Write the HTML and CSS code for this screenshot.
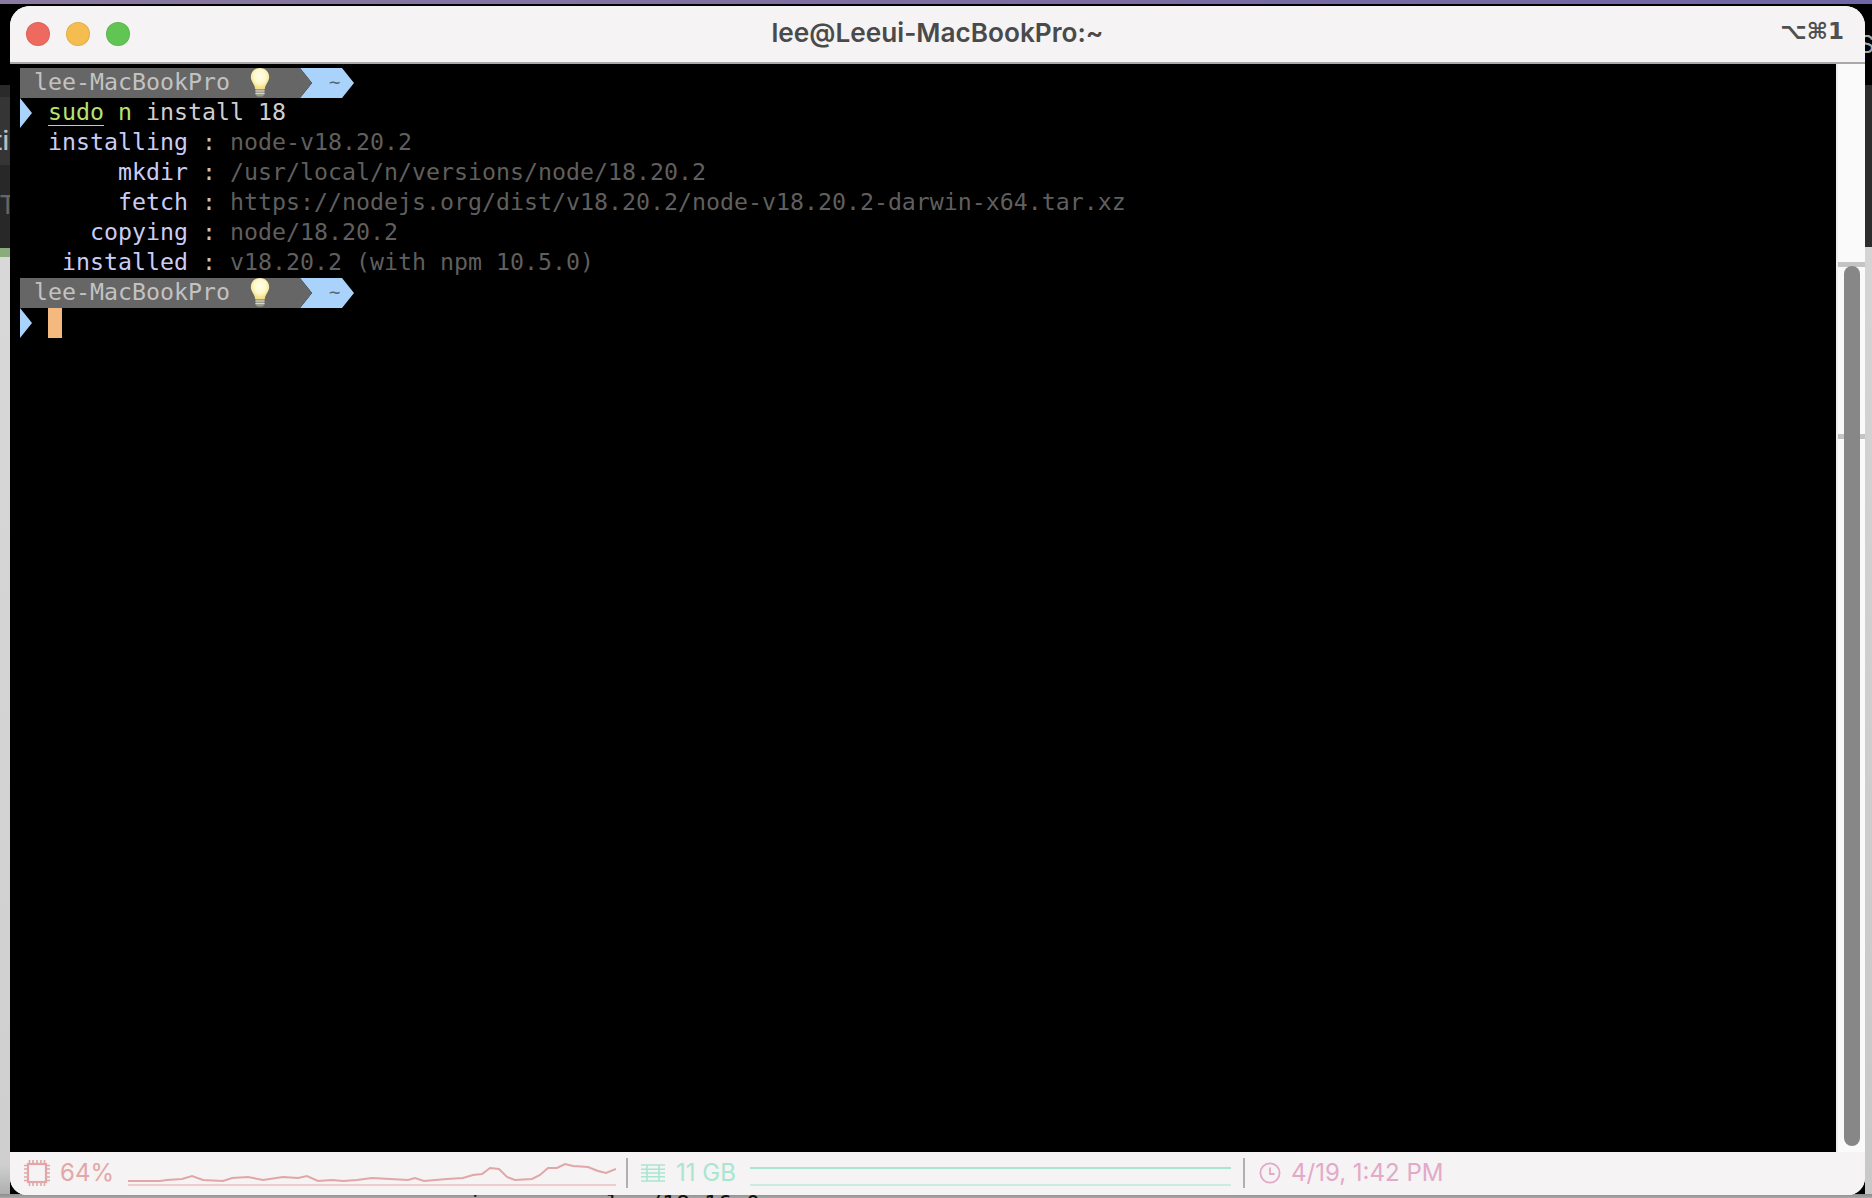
FILE: index.html
```html
<!DOCTYPE html>
<html lang="en">
<head>
<meta charset="utf-8">
<title>lee@Leeui-MacBookPro:~</title>
<link rel="stylesheet" href="styles.css">
</head>
<body>
<div class="desktop">
  <div class="bg-top"></div>
  <div class="bg-left"><span class="frag-ti">ti</span><span class="frag-t">T</span></div>
  <div class="bg-right"><span class="frag-s">S</span></div>
  <div class="bg-bottom"><span class="frag-i">i</span><span class="frag-path">l  /18.16.0</span></div>

  <main class="window">
    <header class="titlebar">
      <div class="lights">
        <span class="light red"></span>
        <span class="light yellow"></span>
        <span class="light green"></span>
      </div>
      <div class="title">lee@Leeui-MacBookPro:~</div>
      <div class="hotkey">⌥⌘1</div>
    </header>

    <div class="body">
      <div class="terminal">
        <div class="row prompt">
          <div class="seg-host">lee-MacBookPro
            <svg class="bulb" viewBox="0 0 20 30"><defs><radialGradient id="g1" cx="50%" cy="40%" r="55%"><stop offset="0" stop-color="#fffef0"/><stop offset="0.6" stop-color="#fff9c8"/><stop offset="1" stop-color="#f5dd86"/></radialGradient></defs><path d="M10 1C4.500 1 .8 5 .8 10c0 4.600 3.600 6.500 4.400 12h9.600c.8-5.500 4.400-7.400 4.400-12C19.200 5 15.500 1 10 1z" fill="url(#g1)"/><path d="M5.500 22h9v5.500l-2 2h-5l-2-2z" fill="#9c9c8c"/><path d="M5.500 24h9M5.500 26.500h9" stroke="#d8d8c8" stroke-width="1"/></svg>
          </div>
          <div class="seg-home">~</div>
        </div>
        <div class="row"><span class="arrow"></span><span class="cmd">sudo</span><span class="cmd-n"> n</span><span class="plain"> install 18</span></div>
        <div class="row"><span class="label">  installing</span><span class="colon"> : </span><span class="dim">node-v18.20.2</span></div>
        <div class="row"><span class="label">       mkdir</span><span class="colon"> : </span><span class="dim">/usr/local/n/versions/node/18.20.2</span></div>
        <div class="row"><span class="label">       fetch</span><span class="colon"> : </span><span class="dim">https://nodejs.org/dist/v18.20.2/node-v18.20.2-darwin-x64.tar.xz</span></div>
        <div class="row"><span class="label">     copying</span><span class="colon"> : </span><span class="dim">node/18.20.2</span></div>
        <div class="row"><span class="label">   installed</span><span class="colon"> : </span><span class="dim">v18.20.2 (with npm 10.5.0)</span></div>
        <div class="row prompt">
          <div class="seg-host">lee-MacBookPro
            <svg class="bulb" viewBox="0 0 20 30"><path d="M10 1C4.500 1 .8 5 .8 10c0 4.600 3.600 6.500 4.400 12h9.600c.8-5.500 4.400-7.400 4.400-12C19.200 5 15.500 1 10 1z" fill="url(#g1)"/><path d="M5.500 22h9v5.500l-2 2h-5l-2-2z" fill="#9c9c8c"/><path d="M5.500 24h9M5.500 26.500h9" stroke="#d8d8c8" stroke-width="1"/></svg>
          </div>
          <div class="seg-home">~</div>
        </div>
        <div class="row"><span class="arrow"></span><span class="cursor"></span></div>
      </div>
      <div class="scrollbar">
        <div class="scroll-band band-a"></div>
        <div class="scroll-band band-b"></div>
        <div class="thumb"></div>
      </div>
    </div>

    <footer class="status">
      <div class="stat cpu">
        <svg class="icon-cpu" viewBox="0 0 26 26" fill="none" stroke="currentColor"><rect x="4" y="4" width="18" height="18" stroke-width="2.200"/><path stroke-width="1.600" d="M5.500 0v3M9 0v3M13 0v3M17 0v3M20.500 0v3M5.500 23v3M9 23v3M13 23v3M17 23v3M20.500 23v3M0 5.500h3M0 9h3M0 13h3M0 17h3M0 20.500h3M23 5.500h3M23 9h3M23 13h3M23 17h3M23 20.500h3"/></svg>
        <span class="stat-text">64%</span>
        <svg class="spark spark-cpu" viewBox="0 0 488 28" fill="none" preserveAspectRatio="none">
          <path class="base" d="M0 25h488"/>
          <polyline class="curve" points="0,21 32,21 39,20 54,19 64,16 75,20 95,21 104,18 120,17 135,20 155,17 170,18 179,16 190,21 204,20 215,21 229,20 244,18 262,19 280,20 287,18 296,21 319,19 335,18 345,15 354,14 362,8 371,9 379,17 387,20 404,19 412,15 420,8 429,8 437,4 445,6 460,7 470,11 478,13 488,9"/>
        </svg>
      </div>
      <span class="divider"></span>
      <div class="stat mem">
        <svg class="icon-mem" viewBox="0 0 24 18" fill="none" stroke="currentColor" stroke-width="1.600"><path d="M0 1h24M0 5.250h24M0 9h24M0 12.750h24M0 17h24M6 1v16M18 1v16"/></svg>
        <span class="stat-text">11 GB</span>
        <svg class="spark spark-mem" viewBox="0 0 481 28" fill="none" preserveAspectRatio="none">
          <path class="base" d="M0 25h481"/>
          <path class="curve" d="M0 8h481"/>
        </svg>
      </div>
      <span class="divider"></span>
      <div class="stat clock">
        <svg class="icon-clock" viewBox="0 0 22 22" fill="none" stroke="currentColor" stroke-width="1.800"><circle cx="11" cy="11" r="9.600"/><path d="M11 5.500V12h4.500"/></svg>
        <span class="stat-text">4/19, 1:42 PM</span>
      </div>
    </footer>
  </main>
</div>
</body>
</html>
```

FILE: styles.css
```css
* { box-sizing: border-box; }
html, body { margin: 0; padding: 0; background: #000; }
.desktop { position: relative; width: 1872px; height: 1198px; overflow: hidden; background: #000; font-family: Inter, "Liberation Sans", sans-serif; }

.bg-top { position: absolute; left: 0; top: 0; width: 1872px; height: 4px; background: linear-gradient(90deg, #8a7aa0, #7d6ea3 50%, #6f66a6); }
.bg-left { position: absolute; left: 0; top: 85px; width: 10px; height: 1113px; overflow: hidden; background: linear-gradient(180deg, #2a2a2a 0, #2a2a2a 12px, #353535 12px, #353535 80px, #282828 80px, #282828 163px, #8aab7c 163px, #8aab7c 172px, #d8d8d8 172px, #cfcfcf 1080px, #aaa 100%); color: #bcbcbc; font-size: 26px; line-height: 30px; }
.frag-ti { position: absolute; right: 1px; top: 41px; font-weight: 500; }
.frag-t { position: absolute; right: -6px; top: 105px; color: #666; }
.bg-right { position: absolute; right: 0; top: 6px; width: 7px; height: 1192px; overflow: hidden; background: linear-gradient(180deg, #000 0, #000 79px, #2c2c2c 79px, #2c2c2c 241px, #d4d4d4 241px, #c8c8c8 100%); color: #aaa; font-size: 24px; }
.frag-s { position: absolute; left: -6px; top: 24px; }
.bg-bottom { position: absolute; left: 0; top: 1194px; width: 1872px; height: 4px; overflow: hidden; background: linear-gradient(180deg, #8c8c8c, #a8a8a8); color: #111; font-size: 23.25px; line-height: 30px; font-family: "DejaVu Sans Mono", monospace; }
.frag-i { position: absolute; left: 468px; top: -5px; }
.frag-path { position: absolute; left: 606px; top: -5px; white-space: pre; }

.window { position: absolute; left: 10px; top: 6px; width: 1855px; height: 1189px; display: flex; flex-direction: column; overflow: hidden; border-radius: 20px 20px 17px 17px; background: #f5f3f4; }

.titlebar { position: relative; flex: 0 0 58px; display: flex; align-items: center; justify-content: center; background: #f5f3f4; border-bottom: 2px solid #a9a9a9; }
.lights { position: absolute; left: 16px; top: 16px; display: flex; gap: 16px; }
.light { width: 24px; height: 24px; border-radius: 50%; border: 1px solid rgba(0, 0, 0, 0.08); }
.red { background: #ee6a5f; }
.yellow { background: #f5bd4f; }
.green { background: #61c554; }
.title { font-size: 26.2px; font-weight: 600; color: #4a4a4a; letter-spacing: 0; margin-top: -3px; }
.hotkey { position: absolute; right: 21px; top: 9px; font-family: "DejaVu Sans", sans-serif; font-size: 23px; font-weight: 700; color: #505050; line-height: 32px; }

.body { flex: 1 1 auto; display: flex; min-height: 0; }
.terminal { flex: 1 1 auto; background: #000; padding: 4px 0 0 10px; font-family: "DejaVu Sans Mono", "Liberation Mono", monospace; font-size: 23.25px; overflow: hidden; }
.row { position: relative; height: 30px; line-height: 28px; white-space: pre; padding-left: 28px; display: block; }
.row .label { color: #c9cdf6; margin-left: -28px; }
.colon { color: #c4c4c4; }
.dim { color: #5f5f5f; }
.plain { color: #cfcfcf; }
.cmd { color: #b7e26f; text-decoration: underline; text-decoration-thickness: 1px; text-underline-offset: 5px; }
.cmd-n { color: #b7e26f; }
.arrow { position: absolute; left: 0; top: 0; width: 12px; height: 30px; background: #a9d3fb; clip-path: polygon(0 0, 100% 50%, 0 100%); }
.cursor { display: block; width: 14px; height: 30px; background: #f3b97f; }

.prompt { display: flex; padding-left: 0; }
.seg-host { position: relative; z-index: 1; width: 292px; height: 30px; background: #666; color: #c2c2c2; padding-left: 14px; white-space: pre-line; clip-path: polygon(0 0, 280px 0, 100% 50%, 280px 100%, 0 100%); }
.bulb { position: absolute; left: 230px; top: -1px; width: 20px; height: 30px; }
.seg-home { width: 54px; height: 30px; margin-left: -12px; padding-left: 29px; background: #a9d3fb; color: #5a6670; font-size: 19px; clip-path: polygon(0 0, 42px 0, 100% 50%, 42px 100%, 0 100%, 12px 50%); }

.scrollbar { position: relative; flex: 0 0 29px; background: #fafafa; border-left: 2px solid #efefef; }
.scroll-band { position: absolute; left: 0; right: 0; height: 5px; background: #c4c4c4; }
.band-a { top: 198px; }
.band-b { top: 370px; }
.thumb { position: absolute; left: 6px; top: 202px; width: 16px; height: 880px; border-radius: 8px; background: #878787; }

.status { flex: 0 0 43px; display: flex; align-items: center; padding: 0 0 0 14px; background: #f5f3f4; }
.stat { display: flex; align-items: center; height: 100%; font-size: 24px; font-family: Inter, "Liberation Sans", sans-serif; }
.stat-text { white-space: nowrap; margin-top: -2px; }
.divider { flex: 0 0 2px; width: 2px; height: 30px; margin-top: -2px; background: #b0b0b0; }
.cpu { width: 602px; color: #e3a6a6; }
.icon-cpu { width: 26px; height: 26px; margin-right: 10px; margin-top: -2px; }
.cpu .stat-text { width: 68px; }
.spark { height: 28px; }
.spark .base { stroke-width: 2px; }
.spark .curve { stroke-width: 2px; }
.spark-cpu { width: 488px; }
.spark-cpu .base { stroke: #f0cccc; }
.spark-cpu .curve { stroke: #e3a6a6; }
.mem { width: 615px; padding-left: 13px; color: #a9e6d0; }
.icon-mem { width: 24px; height: 18px; margin-right: 11px; margin-top: -2px; }
.mem .stat-text { width: 74px; }
.spark-mem { width: 481px; }
.spark-mem .base { stroke: #c8ede0; }
.spark-mem .curve { stroke: #a9e6d0; }
.clock { padding-left: 14px; color: #e2a9c8; }
.icon-clock { width: 22px; height: 22px; margin-right: 10px; margin-top: -2px; }
```
